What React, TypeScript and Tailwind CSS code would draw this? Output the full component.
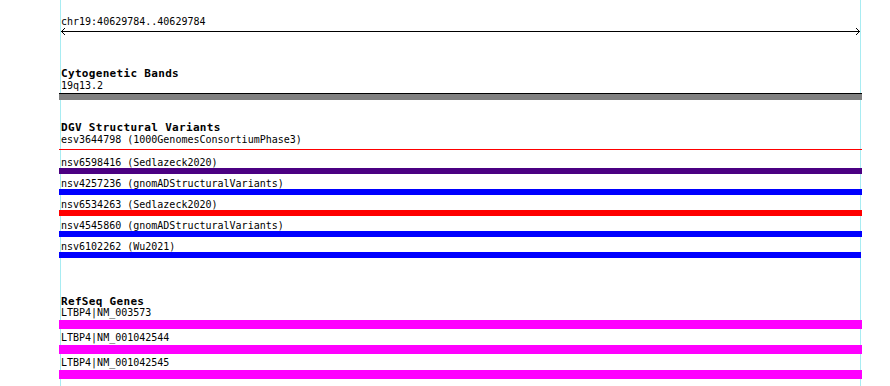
import React from "react";

type Row = { label: string; color: string; last?: boolean };

const dgv: Row[] = [
  { label: "nsv6598416 (Sedlazeck2020)", color: "bg-[#4b0082]" },
  { label: "nsv4257236 (gnomADStructuralVariants)", color: "bg-[#0000ff]" },
  { label: "nsv6534263 (Sedlazeck2020)", color: "bg-[#ff0000]" },
  { label: "nsv4545860 (gnomADStructuralVariants)", color: "bg-[#0000ff]" },
  { label: "nsv6102262 (Wu2021)", color: "bg-[#0000ff]", last: true },
];

const genes = ["LTBP4|NM_003573", "LTBP4|NM_001042544", "LTBP4|NM_001042545"];

function Heading({ children, className }: { children: React.ReactNode; className: string }) {
  return (
    <div className={`text-[11px] font-bold leading-[11px] tracking-[0.32px] ${className}`}>{children}</div>
  );
}

export default function App() {
  return (
    <div className="h-[386px] w-[890px] overflow-hidden bg-white pl-[60px] font-['DejaVu_Sans_Mono',monospace] text-[10px] leading-[11px] text-black">
      <div className="h-full w-[801px] border-x border-[#a8ecf2] pt-[16px]">
        <div>chr19:40629784..40629784</div>
        <svg className="-mr-px block" width={800} height={9} viewBox="0 0 800 9" shapeRendering="crispEdges">
          <line x1={0} y1={4.5} x2={799} y2={4.5} stroke="#000" strokeWidth={1} />
          <polyline points="4,1 0.5,4.5 4,8" fill="none" stroke="#000" strokeWidth={1} />
          <polyline points="795,1 798.5,4.5 795,8" fill="none" stroke="#000" strokeWidth={1} />
        </svg>

        <Heading className="mt-[32px]">Cytogenetic Bands</Heading>
        <div className="mt-px">19q13.2</div>
        <div className="-mx-[2px] mt-[2px] h-[7px] border-t border-black bg-[#808080]" />

        <Heading className="mt-[22px]">DGV Structural Variants</Heading>
        <div className="mt-px">esv3644798 (1000GenomesConsortiumPhase3)</div>
        <div className="-mx-[2px] mt-[4px] h-px bg-[#ff0000]" />
        <div className="mt-[3px]">
          {dgv.map((r) => (
            <div key={r.label} className="pt-[4px]">
              <div className="relative">{r.label}</div>
              <div className={`h-[6px] ${r.color} ${r.last ? "-ml-[2px] -mr-px" : "-mx-[2px]"}`} />
            </div>
          ))}
        </div>

        <Heading className="mt-[38px]">RefSeq Genes</Heading>
        <div className="-mt-[3px]">
          {genes.map((g) => (
            <div key={g} className="pt-[3px]">
              <div className="relative mb-[2px]">{g}</div>
              <div className="-mx-[2px] h-[9px] bg-[#ff00ff]" />
            </div>
          ))}
        </div>
      </div>
    </div>
  );
}
